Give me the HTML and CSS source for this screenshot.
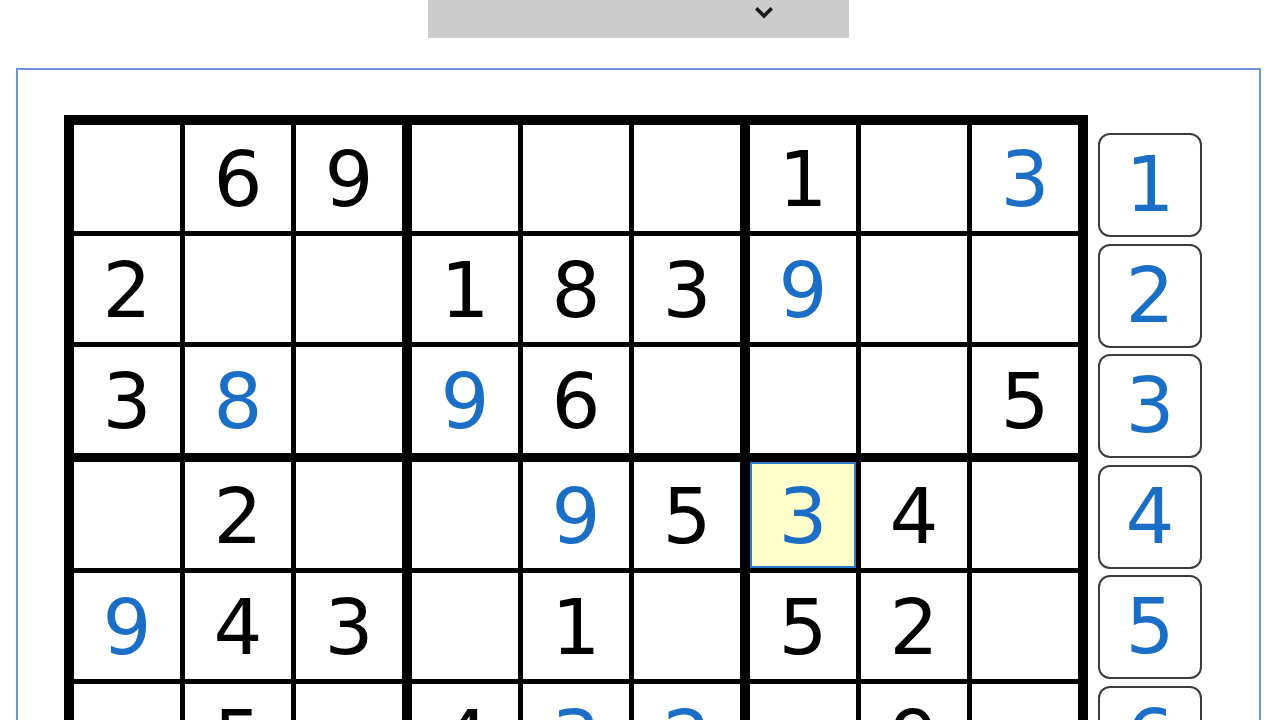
FILE: index.html
```html
<!DOCTYPE html>
<html lang="en">
<head>
<meta charset="utf-8">
<title>Sudoku</title>
<link rel="stylesheet" href="styles.css">
</head>
<body>
<div class="page">
  <div class="select">
    <svg class="chevron" width="18" height="12" viewBox="0 0 18 12"><path d="M2.5 2.5 L9 9 L15.5 2.5" fill="none" stroke="#1a1a1a" stroke-width="3.6" stroke-linecap="square"/></svg>
  </div>
  <div class="panel">
    <div class="board">
      <div class="box">
        <div class="cell"></div><div class="cell">6</div><div class="cell">9</div>
        <div class="cell">2</div><div class="cell"></div><div class="cell"></div>
        <div class="cell">3</div><div class="cell user">8</div><div class="cell"></div>
      </div>
      <div class="box">
        <div class="cell"></div><div class="cell"></div><div class="cell"></div>
        <div class="cell">1</div><div class="cell">8</div><div class="cell">3</div>
        <div class="cell user">9</div><div class="cell">6</div><div class="cell"></div>
      </div>
      <div class="box">
        <div class="cell">1</div><div class="cell"></div><div class="cell user">3</div>
        <div class="cell user">9</div><div class="cell"></div><div class="cell"></div>
        <div class="cell"></div><div class="cell"></div><div class="cell">5</div>
      </div>
      <div class="box">
        <div class="cell"></div><div class="cell">2</div><div class="cell"></div>
        <div class="cell user">9</div><div class="cell">4</div><div class="cell">3</div>
        <div class="cell"></div><div class="cell">5</div><div class="cell"></div>
      </div>
      <div class="box">
        <div class="cell"></div><div class="cell user">9</div><div class="cell">5</div>
        <div class="cell"></div><div class="cell">1</div><div class="cell"></div>
        <div class="cell">4</div><div class="cell user">3</div><div class="cell user">2</div>
      </div>
      <div class="box">
        <div class="cell user selected">3</div><div class="cell">4</div><div class="cell"></div>
        <div class="cell">5</div><div class="cell">2</div><div class="cell"></div>
        <div class="cell"></div><div class="cell">9</div><div class="cell"></div>
      </div>
      <div class="box">
        <div class="cell"></div><div class="cell"></div><div class="cell"></div>
        <div class="cell"></div><div class="cell"></div><div class="cell"></div>
        <div class="cell"></div><div class="cell"></div><div class="cell"></div>
      </div>
      <div class="box">
        <div class="cell"></div><div class="cell"></div><div class="cell"></div>
        <div class="cell"></div><div class="cell"></div><div class="cell"></div>
        <div class="cell"></div><div class="cell"></div><div class="cell"></div>
      </div>
      <div class="box">
        <div class="cell"></div><div class="cell"></div><div class="cell"></div>
        <div class="cell"></div><div class="cell"></div><div class="cell"></div>
        <div class="cell"></div><div class="cell"></div><div class="cell"></div>
      </div>
    </div>
    <div class="keys">
      <button class="key">1</button>
      <button class="key">2</button>
      <button class="key">3</button>
      <button class="key">4</button>
      <button class="key">5</button>
      <button class="key">6</button>
      <button class="key">7</button>
      <button class="key">8</button>
      <button class="key">9</button>
    </div>
  </div>
</div>
</body>
</html>
```

FILE: styles.css
```css
html, body {
  margin: 0;
  padding: 0;
  overflow: hidden;
  background: #ffffff;
}

body {
  font-family: "DejaVu Sans", Verdana, sans-serif;
}

.page {
  padding-left: 16px;
  width: 1245px;
}

.select {
  width: 421px;
  height: 38px;
  margin: 0 auto;
  background: #cccccc;
  display: flex;
  justify-content: flex-end;
  align-items: flex-start;
  padding: 7px 76px 0 0;
  box-sizing: border-box;
}

.chevron {
  display: block;
}

.panel {
  margin-top: 30px;
  width: 1245px;
  box-sizing: border-box;
  border: 2px solid #6d95da;
  padding: 45px 0 40px 46px;
  display: flex;
  align-items: flex-start;
  gap: 10px;
}

.board {
  display: grid;
  grid-template-columns: repeat(3, auto);
  column-gap: 10px;
  row-gap: 9px;
  padding: 10px;
  background: #000000;
}

.box {
  display: grid;
  grid-template-columns: repeat(3, 106px);
  grid-template-rows: repeat(3, 106px);
  gap: 5px;
}

.cell {
  background: #ffffff;
  color: #000000;
  font-size: 77px;
  line-height: 110px;
  text-align: center;
  overflow: hidden;
  box-sizing: border-box;
}

.cell.user {
  color: #1a6ec6;
}

.cell.selected {
  background: #ffffcc;
  border: 2px solid #2b7ccc;
  line-height: 106px;
}

.keys {
  display: flex;
  flex-direction: column;
  gap: 6.6px;
  padding-top: 18px;
}

.key {
  width: 104px;
  height: 104px;
  box-sizing: border-box;
  padding: 0;
  margin: 0;
  border: 2px solid #3c3c3c;
  border-radius: 12px;
  background: #ffffff;
  color: #1a6ec6;
  font-family: "DejaVu Sans", Verdana, sans-serif;
  font-size: 77px;
  line-height: 100px;
  text-align: center;
  overflow: hidden;
}
```
